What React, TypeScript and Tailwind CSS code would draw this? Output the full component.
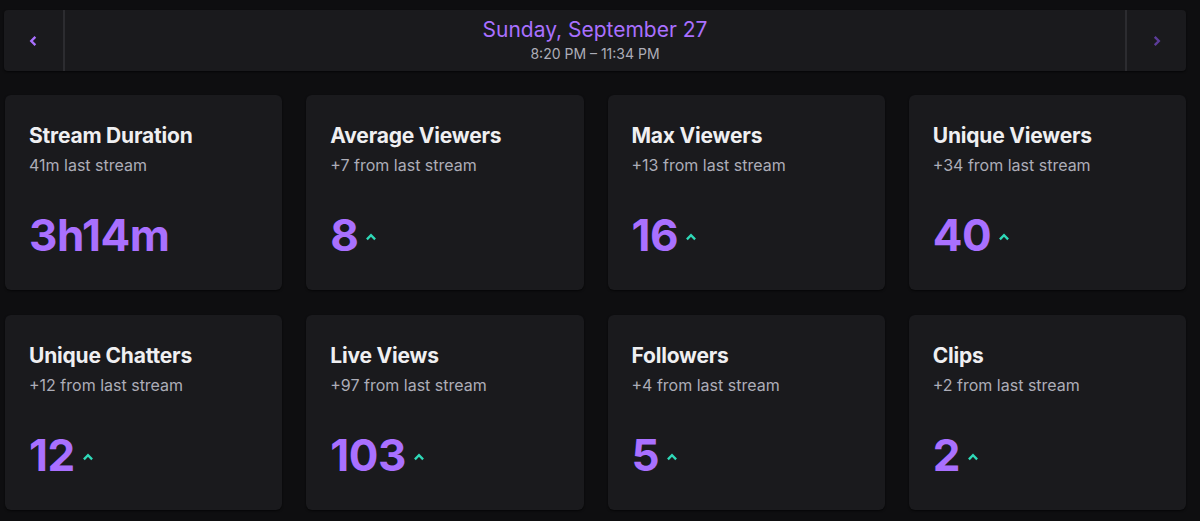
import React from 'react';

interface Stat {
  title: string;
  delta: string;
  value: string;
  up?: boolean;
}

const stats: Stat[] = [
  { title: 'Stream Duration', delta: '41m last stream', value: '3h14m' },
  { title: 'Average Viewers', delta: '+7 from last stream', value: '8', up: true },
  { title: 'Max Viewers', delta: '+13 from last stream', value: '16', up: true },
  { title: 'Unique Viewers', delta: '+34 from last stream', value: '40', up: true },
  { title: 'Unique Chatters', delta: '+12 from last stream', value: '12', up: true },
  { title: 'Live Views', delta: '+97 from last stream', value: '103', up: true },
  { title: 'Followers', delta: '+4 from last stream', value: '5', up: true },
  { title: 'Clips', delta: '+2 from last stream', value: '2', up: true },
];

const Chevron = ({ dir, className }: { dir: 'left' | 'right' | 'up'; className?: string }) => {
  const d =
    dir === 'left' ? 'M7 1 L2.5 5.5 L7 10' : dir === 'right' ? 'M3 1 L7.5 5.5 L3 10' : 'M1 7 L5.5 2.5 L10 7';
  return (
    <svg viewBox="0 0 11 11" className={className} fill="none" stroke="currentColor" strokeWidth="2.6" strokeLinejoin="miter">
      <path d={d} />
    </svg>
  );
};

const StatCard = ({ stat }: { stat: Stat }) => (
  <div className="flex h-[195px] flex-col rounded-md bg-[#1a1a1d] px-6 pt-[27px] shadow-[0_1px_2px_rgba(0,0,0,0.6)]">
    <div className="text-[21px] font-bold leading-7 tracking-[-0.2px] text-[#efeff1]">{stat.title}</div>
    <div className="mt-[3px] text-[16px] leading-6 text-[#adadb8]">{stat.delta}</div>
    <div className="mt-[36px] flex items-center">
      <span className="text-[44px] font-bold leading-none tracking-[-0.5px] text-[#a970ff]">{stat.value}</span>
      {stat.up && <Chevron dir="up" className="ml-2 mt-[6px] h-[10px] w-[10px] text-[#2fd9b8]" />}
    </div>
  </div>
);

export default function App() {
  return (
    <div
      className="h-[521px] w-[1200px] overflow-hidden bg-[#0e0e10] pl-1 pr-[14px] pt-[10px]"
      style={{ fontFamily: 'Inter, "Noto Sans", sans-serif' }}
    >
      {/* Date navigator */}
      <div className="flex h-[61px] rounded-sm bg-[#1a1a1d] shadow-[0_1px_2px_rgba(0,0,0,0.6)]">
        <button className="flex w-[61px] items-center justify-center border-r-2 border-[#2c2c30]">
          <Chevron dir="left" className="h-[10px] w-[10px] text-[#a970ff]" />
        </button>
        <div className="flex flex-1 flex-col items-center justify-center pt-px">
          <div className="text-[21px] leading-6 text-[#a970ff]">Sunday, September 27</div>
          <div className="mt-[2px] text-[14px] leading-5 text-[#adadb8]">8:20 PM – 11:34 PM</div>
        </div>
        <button className="flex w-[61px] items-center justify-center border-l-2 border-[#2c2c30]">
          <Chevron dir="right" className="h-[10px] w-[10px] text-[#5c3c99]" />
        </button>
      </div>

      {/* Stats grid */}
      <div className="ml-px mt-6 grid grid-cols-4 gap-x-6 gap-y-[25px]">
        {stats.map((s) => (
          <StatCard key={s.title} stat={s} />
        ))}
      </div>
    </div>
  );
}
